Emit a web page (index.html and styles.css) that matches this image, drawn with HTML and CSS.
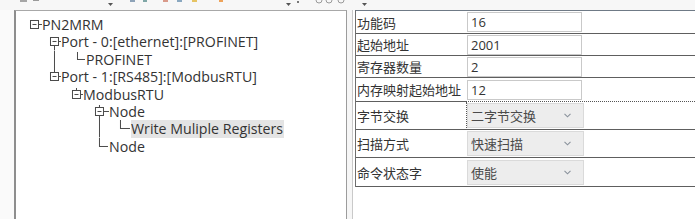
FILE: index.html
```html
<!DOCTYPE html>
<html lang="zh">
<head>
<meta charset="utf-8">
<link rel="stylesheet" href="styles.css">
</head>
<body>
<div class="app">
  <div class="toolbar">
    <svg class="toolbar-icons" width="695" height="10" viewBox="0 0 695 10">
      <rect x="20" y="0" width="7" height="2" fill="#a6a6a6"/>
      <rect x="33" y="0" width="6" height="1" fill="#9a9a9a"/>
      <polygon points="108,3 113,3 110.5,6" fill="#555"/>
      <rect x="130" y="0" width="5" height="2" fill="#8ea3b8"/>
      <rect x="143" y="0" width="4" height="2" fill="#7fa6a6"/>
      <rect x="163" y="0" width="5" height="2" fill="#d99a8a"/>
      <rect x="177" y="0" width="5" height="2" fill="#8aa8c0"/>
      <rect x="192" y="0" width="5" height="2" fill="#e6c464"/>
      <rect x="219" y="0" width="4" height="2" fill="#eea35a"/>
      <polygon points="286,3 291,3 288.5,6" fill="#555"/>
      <rect x="297" y="1" width="2" height="2" fill="#777"/>
      <path d="M316 0 a3 3 0 0 0 6 0" fill="none" stroke="#9a9a9a"/>
      <path d="M326 0 a3 3 0 0 0 6 0" fill="none" stroke="#9a9a9a"/>
      <path d="M338 0 a3 3 0 0 0 6 0" fill="none" stroke="#9a9a9a"/>
      <polygon points="362,3 367,3 364.5,6" fill="#555"/>
    </svg>
  </div>
  <div class="main">
    <div class="gutter"></div>
    <div class="tree-panel">
      <ul class="tree">
        <li class="node">
          <svg class="guide" width="26" height="17.4" viewBox="0 0 26 17.4">
            <rect x="14.5" y="4.5" width="8" height="8"/>
            <line x1="16.5" y1="8.5" x2="20.5" y2="8.5"/>
            <line x1="22.5" y1="8.5" x2="26" y2="8.5"/>
          </svg>
          <span class="label">PN2MRM</span>
        </li>
        <li class="node">
          <svg class="guide" width="45" height="17.4" viewBox="0 0 45 17.4">
            <rect x="34.5" y="4.5" width="8" height="8"/>
            <line x1="36.5" y1="8.5" x2="40.5" y2="8.5"/>
            <line x1="42.5" y1="8.5" x2="45" y2="8.5"/>
            <line x1="38.5" y1="12.5" x2="38.5" y2="17.4"/>
          </svg>
          <span class="label">Port - 0:[ethernet]:[PROFINET]</span>
        </li>
        <li class="node">
          <svg class="guide" width="70" height="17.4" viewBox="0 0 70 17.4">
            <line x1="38.5" y1="0" x2="38.5" y2="17.4"/>
            <line x1="61.5" y1="1" x2="61.5" y2="9"/>
            <line x1="61.5" y1="8.5" x2="69" y2="8.5"/>
          </svg>
          <span class="label">PROFINET</span>
        </li>
        <li class="node">
          <svg class="guide" width="45" height="17.4" viewBox="0 0 45 17.4">
            <line x1="38.5" y1="0" x2="38.5" y2="4.5"/>
            <rect x="34.5" y="4.5" width="8" height="8"/>
            <line x1="36.5" y1="8.5" x2="40.5" y2="8.5"/>
            <line x1="42.5" y1="8.5" x2="45" y2="8.5"/>
          </svg>
          <span class="label">Port - 1:[RS485]:[ModbusRTU]</span>
        </li>
        <li class="node">
          <svg class="guide" width="67" height="17.4" viewBox="0 0 67 17.4">
            <line x1="60.5" y1="2" x2="60.5" y2="4.5"/>
            <rect x="56.5" y="4.5" width="8" height="8"/>
            <line x1="58.5" y1="8.5" x2="62.5" y2="8.5"/>
            <line x1="64.5" y1="8.5" x2="67" y2="8.5"/>
          </svg>
          <span class="label">ModbusRTU</span>
        </li>
        <li class="node">
          <svg class="guide" width="93" height="17.4" viewBox="0 0 93 17.4">
            <line x1="83.5" y1="2" x2="83.5" y2="4.5"/>
            <rect x="79.5" y="4.5" width="8" height="8"/>
            <line x1="81.5" y1="8.5" x2="85.5" y2="8.5"/>
            <line x1="87.5" y1="8.5" x2="93" y2="8.5"/>
            <line x1="83.5" y1="12.5" x2="83.5" y2="17.4"/>
          </svg>
          <span class="label">Node</span>
        </li>
        <li class="node">
          <svg class="guide" width="115" height="17.4" viewBox="0 0 115 17.4">
            <line x1="83.5" y1="0" x2="83.5" y2="17.4"/>
            <line x1="104.5" y1="0" x2="104.5" y2="9"/>
            <line x1="104.5" y1="8.5" x2="114" y2="8.5"/>
          </svg>
          <span class="label selected">Write Muliple Registers</span>
        </li>
        <li class="node">
          <svg class="guide" width="93" height="17.4" viewBox="0 0 93 17.4">
            <line x1="83.5" y1="0" x2="83.5" y2="9"/>
            <line x1="83.5" y1="8.5" x2="92" y2="8.5"/>
          </svg>
          <span class="label">Node</span>
        </li>
      </ul>
    </div>
    <div class="splitter"></div>
    <div class="props">
      <div class="grid">
        <div class="row r1">
          <div class="key">功能码</div>
          <div class="val"><div class="input">16</div></div>
        </div>
        <div class="row r2">
          <div class="key">起始地址</div>
          <div class="val"><div class="input">2001</div></div>
        </div>
        <div class="row r3">
          <div class="key">寄存器数量</div>
          <div class="val"><div class="input">2</div></div>
        </div>
        <div class="row r4">
          <div class="key">内存映射起始地址</div>
          <div class="val focus-above"><div class="input">12</div></div>
        </div>
        <div class="row combo-row">
          <div class="key">字节交换</div>
          <div class="val focused"><div class="combo"><span>二字节交换</span><svg class="chev" width="7" height="5" viewBox="0 0 7 5"><path d="M0.5 0.8 L3.5 3.8 L6.5 0.8"/></svg></div></div>
        </div>
        <div class="row combo-row">
          <div class="key">扫描方式</div>
          <div class="val"><div class="combo"><span>快速扫描</span><svg class="chev" width="7" height="5" viewBox="0 0 7 5"><path d="M0.5 0.8 L3.5 3.8 L6.5 0.8"/></svg></div></div>
        </div>
        <div class="row combo-row last">
          <div class="key">命令状态字</div>
          <div class="val"><div class="combo"><span>使能</span><svg class="chev" width="7" height="5" viewBox="0 0 7 5"><path d="M0.5 0.8 L3.5 3.8 L6.5 0.8"/></svg></div></div>
        </div>
      </div>
    </div>
  </div>
</div>
</body>
</html>
```
FILE: styles.css
```css
* { box-sizing: border-box; }

html, body {
  margin: 0;
  padding: 0;
  background: #ffffff;
}

body {
  width: 695px;
  height: 219px;
  overflow: hidden;
  font-family: "Open Sans", "Noto Sans CJK SC", sans-serif;
  font-size: 13px;
  color: #333333;
}

.app {
  display: flex;
  flex-direction: column;
  height: 219px;
}

.toolbar {
  height: 10px;
  background: #f7f7f7;
  flex: none;
}

.toolbar-icons {
  display: block;
}

.main {
  display: flex;
  flex: 1;
  min-height: 0;
}

.gutter {
  width: 14px;
  background: #fafafa;
  flex: none;
}

.tree-panel {
  width: 333px;
  flex: none;
  background: #ffffff;
  border-left: 2px solid #8e8e8e;
  border-top: 1px solid #a8a8a8;
  border-right: 1px solid #9c9c9c;
  padding-top: 5px;
}

.tree {
  list-style: none;
  margin: 0;
  padding: 0;
}

.node {
  display: flex;
  align-items: center;
  height: 17.4px;
  white-space: nowrap;
}

.guide {
  flex: none;
  display: block;
  fill: none;
  stroke: #4a4a4a;
  stroke-width: 1;
}

.label {
  font-size: 14.2px;
  line-height: 17.4px;
  color: #333333;
}

.label.selected {
  background: #e4e4e4;
  padding-right: 1px;
}

.splitter {
  width: 5px;
  flex: none;
  background: #f6f6f6;
}

.props {
  flex: 1;
  min-width: 0;
  background: #ffffff;
  border-left: 1px solid #c9c9c9;
  padding-left: 2px;
}

.grid {
  border-top: 1px solid #6f7a86;
  border-left: 1px solid #6e6e6e;
  font-family: "Noto Sans CJK SC", "Open Sans", sans-serif;
}

.row {
  display: flex;
  height: 23px;
}

.row.r1 { height: 23px; }
.row.r2 { height: 22px; }
.row.r3 { height: 22px; }
.row.r4 { height: 24px; }
.row.combo-row { height: 28px; }
.row.combo-row.last { height: 29px; }

.key {
  width: 110px;
  flex: none;
  padding-left: 1px;
  display: flex;
  align-items: center;
  border-bottom: 1px solid #5e5e5e;
  color: #333333;
  white-space: nowrap;
}

.val {
  flex: 1;
  display: flex;
  align-items: center;
  padding-left: 1px;
  border-bottom: 1px solid #5e5e5e;
}

.val.focus-above {
  border-bottom: 1px dotted #555555;
}

.val.focused {
  border-left: 1px dotted #555555;
  padding-left: 0;
}

.input {
  width: 115px;
  height: 20px;
  border: 1px solid #c9c9c9;
  background: #ffffff;
  padding-left: 3px;
  display: flex;
  align-items: center;
  font-family: "Open Sans", "Noto Sans CJK SC", sans-serif;
  color: #333333;
}

.combo {
  width: 117px;
  height: 25px;
  background: #ededed;
  border: 1px solid #dadada;
  display: flex;
  align-items: center;
  justify-content: space-between;
  padding: 0 12px 0 3px;
  color: #4a4a4a;
}

.chev {
  display: block;
  fill: none;
  stroke: #8a929c;
  stroke-width: 1.1;
}
```
